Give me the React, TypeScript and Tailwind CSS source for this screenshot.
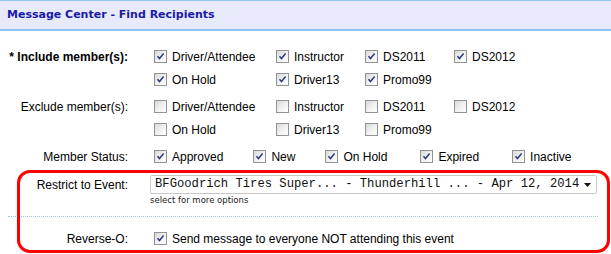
import React from 'react';

type Opt = { label: string; checked: boolean };

const Box: React.FC<{ checked: boolean }> = ({ checked }) => (
  <span className="relative inline-block w-[13px] h-[13px] shrink-0 border border-[#939393] bg-gradient-to-br from-[#d8d8d8] via-[#f0f0f0] to-white">
    {checked && (
      <svg viewBox="0 0 11 11" className="absolute left-0 top-0 w-[11px] h-[11px]">
        <path d="M2.5 5.2 L4.5 7.6 L8.6 2.6" fill="none" stroke="#2c3c7c" strokeWidth="1.5" />
      </svg>
    )}
  </span>
);

const Check: React.FC<Opt & { className?: string }> = ({ label, checked, className }) => (
  <div className={`flex items-center gap-[5px] ${className ?? ''}`}>
    <Box checked={checked} />
    <span>{label}</span>
  </div>
);

const members = ['Driver/Attendee', 'Instructor', 'DS2011', 'DS2012', 'On Hold', 'Driver13', 'Promo99'];
const statuses = ['Approved', 'New', 'On Hold', 'Expired', 'Inactive'];

const MemberGrid: React.FC<{ checked: boolean }> = ({ checked }) => (
  <div className="grid grid-cols-[122px_89px_89px_auto]">
    {members.map(m => (
      <Check key={m} label={m} checked={checked} className="h-[23px]" />
    ))}
  </div>
);

const Row: React.FC<{ label: string; bold?: boolean; className?: string; children: React.ReactNode }> = ({ label, bold, className, children }) => (
  <div className={`flex ${className ?? ''}`}>
    <div className={`w-[129px] pr-px text-right h-[23px] flex items-center justify-end ${bold ? 'font-bold' : ''}`}>{label}</div>
    <div className="pl-[25px] flex-1">{children}</div>
  </div>
);

export default function App() {
  return (
    <div className="relative w-[611px] h-[254px] overflow-hidden bg-white text-[12px] text-black font-['Liberation_Sans',Arial,sans-serif]">
      <div className="h-[31px] border-t border-[#8cc6ee] border-b-2 border-b-[#8cc6ee] bg-[#e7eafb] flex items-center px-[7px]">
        <h1 className="font-['DejaVu_Sans',Verdana,sans-serif] font-bold text-[11px] text-[#1b1ba8]">
          Message Center - Find Recipients
        </h1>
      </div>

      <div className="pt-[14px]">
        <Row label="* Include member(s):" bold>
          <MemberGrid checked />
        </Row>
        <Row label="Exclude member(s):" className="mt-[4px]">
          <MemberGrid checked={false} />
        </Row>
        <Row label="Member Status:" className="mt-[4px]">
          <div className="flex h-[23px] items-center">
            {statuses.map((s, i) => (
              <Check key={s} label={s} checked className={i < statuses.length - 1 ? (i < 2 ? 'mr-[30px]' : 'mr-[33px]') : ''} />
            ))}
          </div>
        </Row>

        <div className="flex mt-[7px]">
          <div className="w-[129px] pr-px h-[19px] flex items-center justify-end">Restrict to Event:</div>
          <div className="pl-[21px]">
            <div className="w-[447px] h-[19px] border border-[#c8c8c8] rounded-[2px] bg-white flex items-center pl-[4px] pr-[5px] font-['Liberation_Mono','Courier_New',monospace] text-[12.2px] text-[#111]">
              <span className="flex-1 whitespace-nowrap">BFGoodrich Tires Super... - Thunderhill ... - Apr 12, 2014</span>
              <svg viewBox="0 0 7 4" className="w-[7px] h-[4px]">
                <path d="M0 0 H7 L3.5 4 Z" fill="#111" />
              </svg>
            </div>
            <div className="mt-[1px] text-[8.5px] leading-[11px] font-['DejaVu_Sans',Verdana,sans-serif] text-[#222]">select for more options</div>
          </div>
        </div>

        <div className="ml-[8px] w-[590px] mt-[10px] border-t border-dotted border-[#9cc4dc]"></div>

        <Row label="Reverse-O:" className="mt-[10px]">
          <Check label="Send message to everyone NOT attending this event" checked className="h-[23px]" />
        </Row>
      </div>

      <div className="absolute left-[17px] top-[170px] w-[593px] h-[83px] border-[3px] border-[#f00] rounded-[13px] pointer-events-none"></div>
    </div>
  );
}
